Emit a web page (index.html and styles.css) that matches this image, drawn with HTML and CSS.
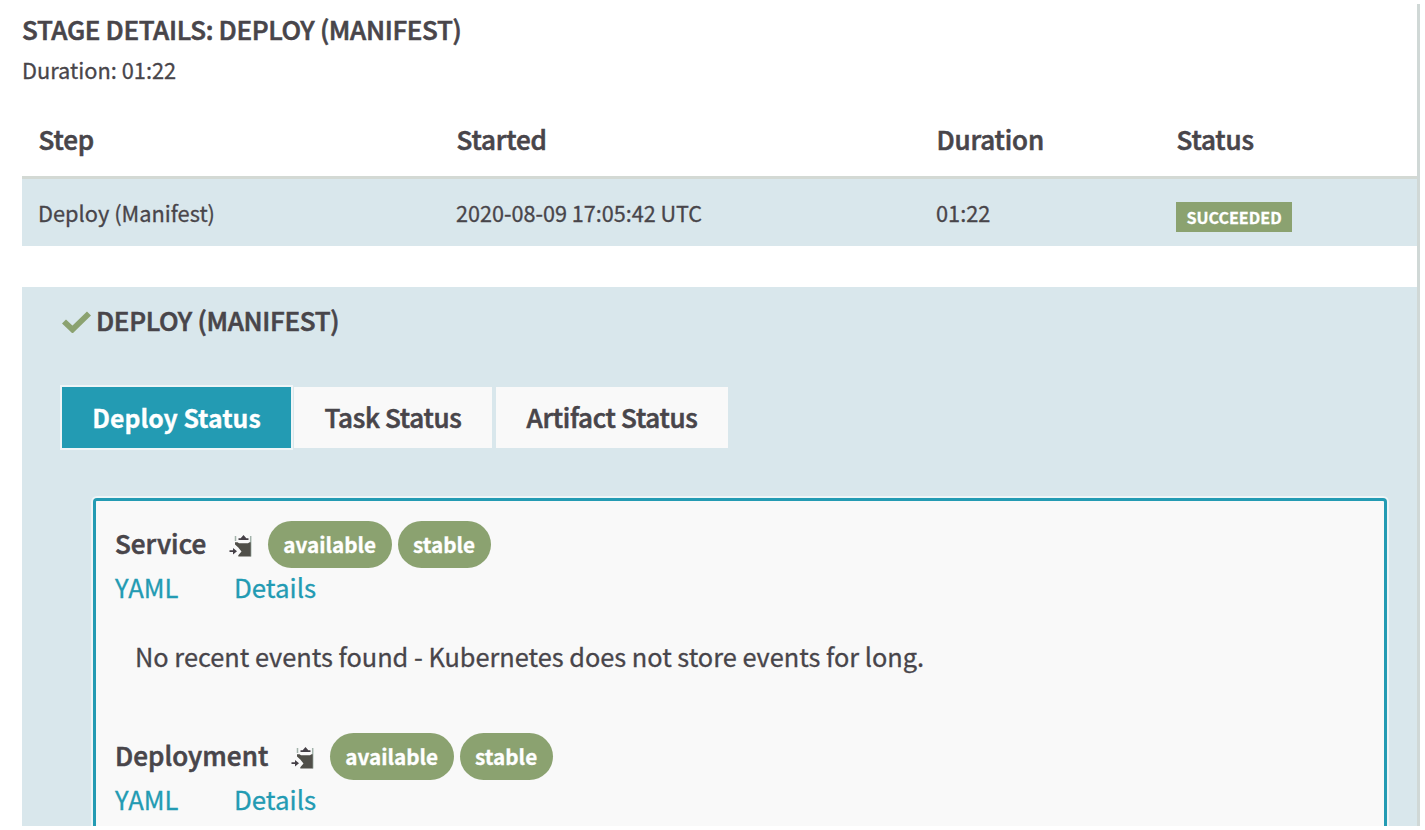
FILE: index.html
```html
<!DOCTYPE html>
<html lang="en">
<head>
<meta charset="utf-8">
<title>Stage details</title>
<link rel="stylesheet" href="styles.css">
</head>
<body>
<svg class="defs" width="0" height="0" aria-hidden="true">
  <symbol id="clip" viewBox="0 0 24 24">
    <path d="M6.500 2v5M21.700 2v20.500" fill="none" stroke="#a3b3ab" stroke-width="1.500"/>
    <path d="M9.500 6V4.200h2.200L14.500 1l2.800 3.200h2.200V6z" fill="#454047"/>
    <path d="M6 8.300h2.500l1.500 1h9l1.500-1h1.200v14.200H9.300v-1.300l3.200-3.700-3.200-4L6 10.500z" fill="#504f49"/>
    <path d="M.5 16.300h3.500v-2.300l4 3.200-4 3.200v-2.300H.5z" fill="#454047"/>
  </symbol>
</svg>
<main class="frame">
  <h1 class="title">STAGE DETAILS: DEPLOY (MANIFEST)</h1>
  <p class="duration">Duration: 01:22</p>
  <div class="row head">
    <span>Step</span><span>Started</span><span>Duration</span><span>Status</span>
  </div>
  <div class="row data">
    <span>Deploy (Manifest)</span><span class="date">2020-08-09 17:05:42 UTC</span><span>01:22</span><span><b class="badge">SUCCEEDED</b></span>
  </div>
  <section class="panel">
    <h2 class="panel-title">
      <svg class="check" viewBox="0 0 29 22"><path d="M2 10.500l8.500 8L27 2.500" fill="none" stroke="#8ba270" stroke-width="5.800"/></svg>
      <span>DEPLOY (MANIFEST)</span>
    </h2>
    <nav class="tabs">
      <a class="tab active">Deploy Status</a>
      <a class="tab task">Task Status</a>
      <a class="tab artifact">Artifact Status</a>
    </nav>
    <div class="box">
      <article class="item">
        <div class="line"><h3>Service</h3><svg class="clip"><use href="#clip"/></svg><span class="pill">available</span><span class="pill">stable</span></div>
        <div class="links"><a class="yaml">YAML</a><a>Details</a></div>
        <p class="events">No recent events found - Kubernetes does not store events for long.</p>
      </article>
      <article class="item">
        <div class="line"><h3>Deployment</h3><svg class="clip"><use href="#clip"/></svg><span class="pill">available</span><span class="pill">stable</span></div>
        <div class="links"><a class="yaml">YAML</a><a>Details</a></div>
      </article>
    </div>
  </section>
</main>
</body>
</html>
```

FILE: styles.css
```css
* { box-sizing: border-box; margin: 0; }
body {
  height: 830px;
  padding-top: 4px;
  overflow: hidden;
  background: #fff;
  color: #48454a;
  font-family: "Noto Sans CJK SC", "Noto Sans", sans-serif;
  font-size: 22px;
  -webkit-text-stroke: 0.3px currentColor;
}
.defs { display: block; height: 0; }
.frame {
  display: flex;
  flex-direction: column;
  width: 1420px;
  height: 822px;
  padding: 9px 0 0 22px;
  border-right: 3px solid #d0d8d6;
  overflow: hidden;
}
.title, .panel-title, .head, .tab, h3 {
  font-size: 26px;
  font-weight: 500;
  line-height: 32px;
  -webkit-text-stroke: 0.6px currentColor;
  white-space: nowrap;
}
.title { letter-spacing: -0.32px; flex: none; }
.duration {
  margin: 11px 0 19px;
  font-size: 21.8px;
  line-height: 28px;
  flex: none;
}
.row {
  display: grid;
  grid-template-columns: 418px 480px 240px 1fr;
  align-items: center;
  padding-left: 16px;
  flex: none;
}
.head { height: 73px; padding: 0 0 1px 16.5px; letter-spacing: -0.15px; }
.data {
  height: 70px;
  border-top: 3px solid #d3d9d4;
  background: #d9e7ec;
  font-size: 21.8px;
  line-height: 28px;
  white-space: nowrap;
}
.date { font-size: 21.6px; }
.badge {
  display: block;
  width: 116px;
  height: 30px;
  margin: 8px 0 0;
  background: #8ba270;
  color: #fff;
  font-size: 16.1px;
  line-height: 30px;
  text-align: center;
}
.panel {
  flex: 1;
  min-height: 0;
  display: flex;
  flex-direction: column;
  margin-top: 41px;
  padding: 17px 30px 0 40px;
  background: #d9e7ec;
}
.panel-title {
  display: flex;
  align-items: center;
  gap: 5px;
  flex: none;
  letter-spacing: -0.3px;
}
.check { width: 29px; height: 22px; margin-top: 4px; }
.tabs { display: flex; gap: 4px; margin-top: 51px; flex: none; }
.tab {
  height: 61px;
  width: 198px;
  background: #f9f9f9;
  line-height: 60px;
  text-align: center;
  letter-spacing: -0.3px;
}
.tab.active {
  width: 229px;
  background: #239bb3;
  color: #fff;
  font-size: 24.8px;
  font-weight: 700;
  letter-spacing: 0;
  -webkit-text-stroke: 0.3px currentColor;
  box-shadow: 0 0 0 2px #eff5f7;
}
.tab.task { margin-left: -1px; }
.tab.artifact { width: 232px; }
.box {
  flex: 1;
  min-height: 0;
  margin: 50px 0 0 31px;
  padding: 20px 20px 0 19px;
  border: solid #239bb3;
  border-width: 3px 3px 0;
  border-radius: 4px 4px 0 0;
  background: #f9f9f9;
  box-shadow: 0 0 0 2px #eef5f7;
}
.item { height: 212px; }
.line { display: flex; align-items: center; height: 47px; }
h3 { margin-top: -4px; letter-spacing: 0.05px; }
.clip { width: 24px; height: 24px; margin: 3px 15px 0 22.5px; }
.pill {
  height: 47px;
  margin-right: 6px;
  padding: 0 15.5px;
  border-radius: 24px;
  background: #8ba270;
  color: #fff;
  font-size: 20.7px;
  font-weight: 700;
  line-height: 47px;
}
.links { display: flex; color: #239bb3; line-height: 38px; }
.links a { font-size: 25.9px; }
.links .yaml { width: 119px; font-size: 25.6px; }
.events { margin: 31px 0 0 20px; font-size: 25.33px; line-height: 38px; white-space: nowrap; }
```
